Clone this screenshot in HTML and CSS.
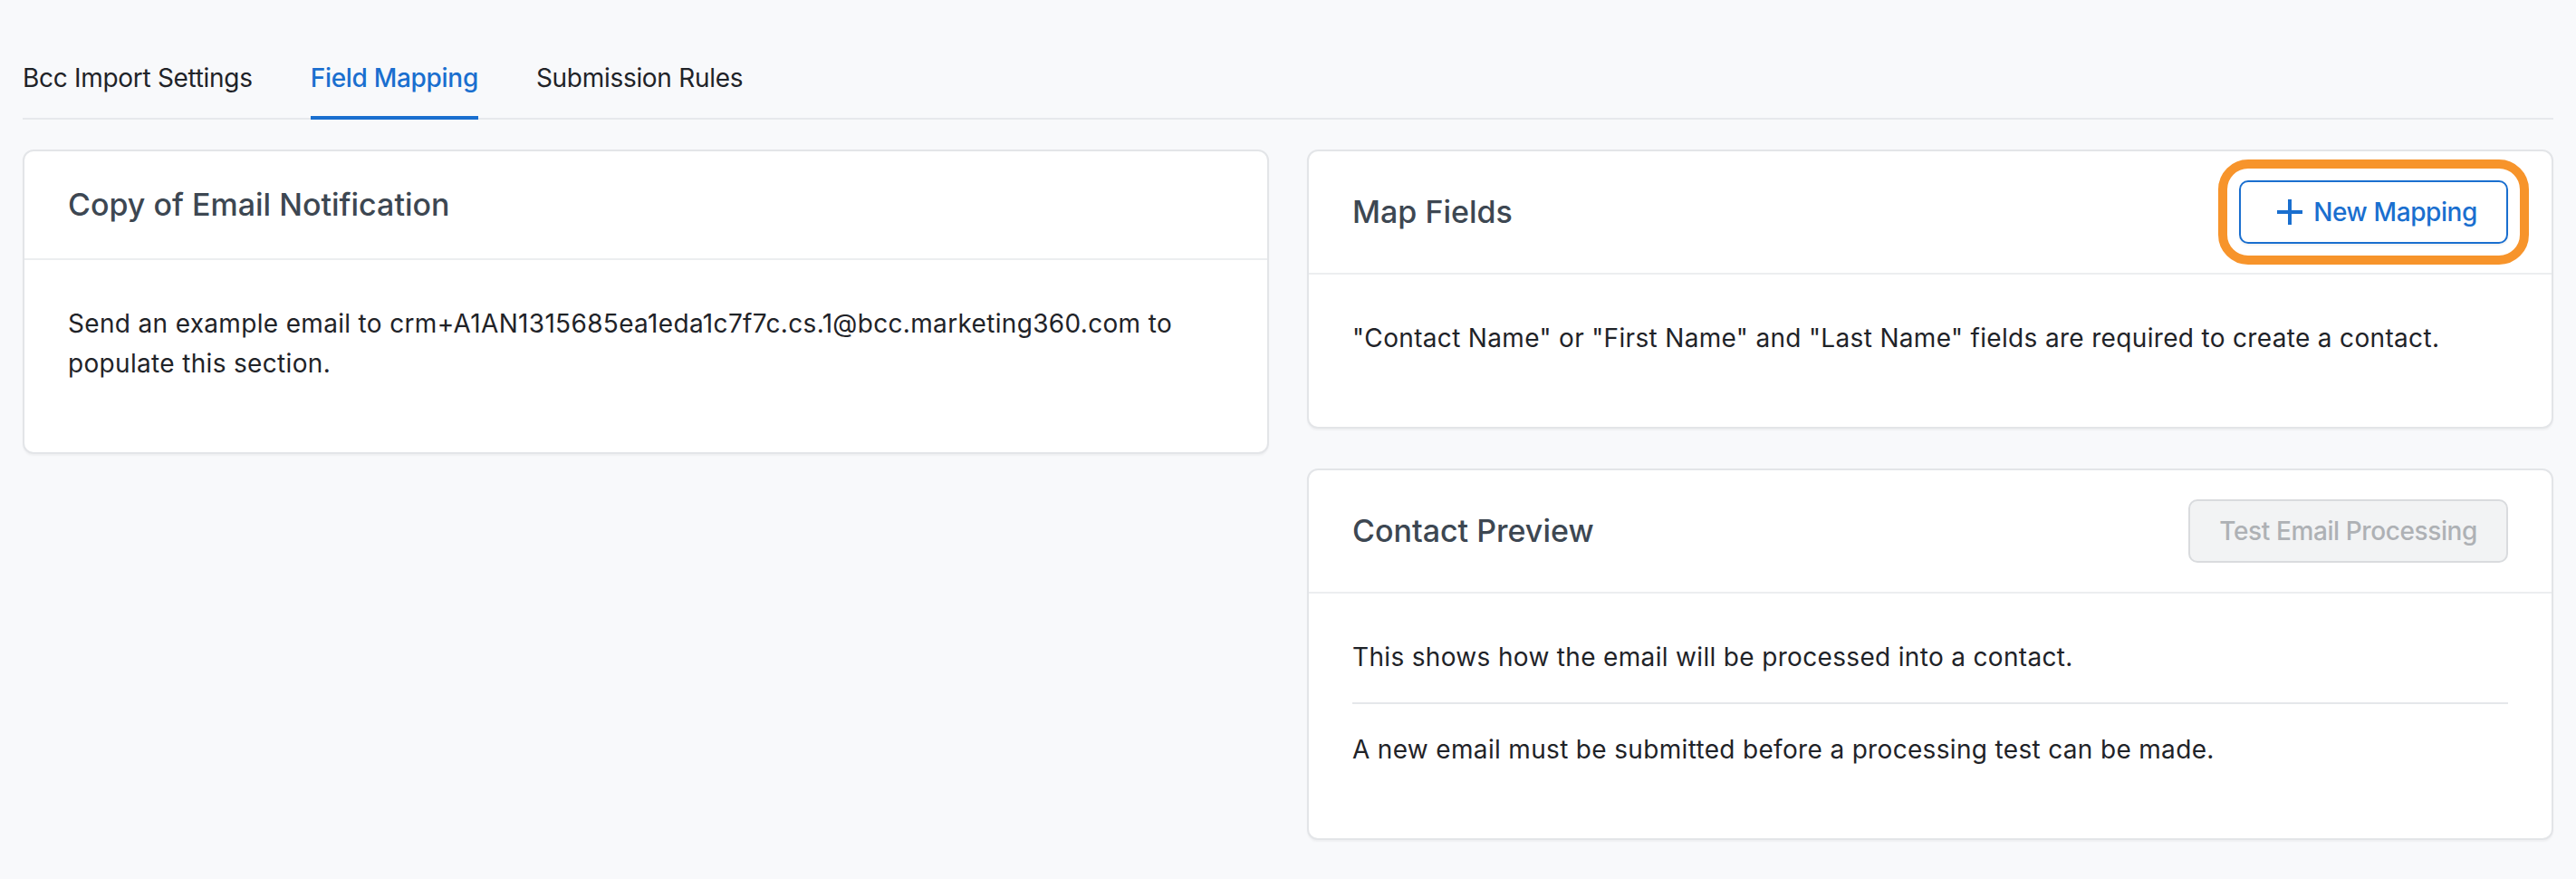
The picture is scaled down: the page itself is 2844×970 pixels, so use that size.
FILE: index.html
```html
<!DOCTYPE html>
<html lang="en">
<head>
  <meta charset="UTF-8">
  <meta name="viewport" content="width=device-width, initial-scale=1.0">
  <title>Bcc Import - Field Mapping</title>

  <link rel="stylesheet" href="styles.css">
</head>
<body>
  <div class="page">
    <nav class="tabs">
      <a class="tab">Bcc Import Settings</a>
      <a class="tab tab-active">Field Mapping</a>
      <a class="tab">Submission Rules</a>
    </nav>

    <div class="columns">
      <div class="column">
        <div class="card">
          <div class="card-header">
            <span class="card-title">Copy of Email Notification</span>
          </div>
          <div class="card-body">
            <p class="card-row">Send an example email to crm+A1AN1315685ea1eda1c7f7c.cs.1@bcc.marketing360.com to populate this section.</p>
          </div>
        </div>
      </div>

      <div class="column">
        <div class="card">
          <div class="card-header">
            <span class="card-title">Map Fields</span>
            <button class="btn btn-primary btn-highlight" id="new-mapping-button">
              <svg class="btn-icon" width="32" height="32" viewBox="0 0 32 32">
                <path d="M16 2v28M2 16h28" stroke="currentColor" stroke-width="4" fill="none"/>
              </svg>
              New Mapping
            </button>
          </div>
          <div class="card-body">
            <p class="card-row">"Contact Name" or "First Name" and "Last Name" fields are required to create a contact.</p>
          </div>
        </div>

        <div class="card">
          <div class="card-header">
            <span class="card-title">Contact Preview</span>
            <button class="btn" disabled>Test Email Processing</button>
          </div>
          <div class="card-body">
            <p class="card-row">This shows how the email will be processed into a contact.</p>
            <p class="card-row">A new email must be submitted before a processing test can be made.</p>
          </div>
        </div>
      </div>
    </div>
  </div>
</body>
</html>
```

FILE: styles.css
```css
body, html {
  margin: 0;
  height: 100%;
  background: #f8f9fb;
  font-family: Inter, "Noto Sans", sans-serif;
  color: #1f2328;
}
.page {
  padding: 0 25px;
}

/* tabs */
.tabs {
  display: flex;
  gap: 64px;
  padding-top: 66px;
  border-bottom: 2px solid #e7e9ec;
}
.tab {
  font-size: 28px;
  line-height: 40px;
  letter-spacing: -0.3px;
  padding-bottom: 22px;
  margin-bottom: -2px;
  border-bottom: 4px solid transparent;
  color: #1f2328;
  cursor: pointer;
}
.tab-active {
  color: #1a6fcf;
  font-weight: 500;
  border-bottom-color: #1a6fcf;
}

/* cards */
.columns {
  display: grid;
  grid-template-columns: 1fr 1fr;
  gap: 42px;
  margin-top: 33px;
  align-items: start;
}
.column {
  display: flex;
  flex-direction: column;
  gap: 44px;
}
.card {
  background: #fff;
  border: 2px solid #e3e5e8;
  border-radius: 12px;
  box-shadow: 0 2px 2px rgba(0, 0, 0, 0.04);
}
.card-header {
  display: flex;
  align-items: center;
  justify-content: space-between;
  padding: 32px 48px;
  border-bottom: 2px solid #eceef0;
}
.card-title {
  font-size: 34px;
  line-height: 54px;
  font-weight: 500;
  color: #3d4752;
}
.card-body {
  padding: 48px 48px 48px;
}
.card-row {
  margin: 0;
  padding-bottom: 28px;
  font-size: 28px;
  line-height: 44px;
  letter-spacing: 0.33px;
}
.card-row + .card-row {
  padding-top: 28px;
  border-top: 2px solid #e5e7ea;
}

/* buttons */
.btn {
  display: flex;
  align-items: center;
  height: 70px;
  padding: 0 32px;
  border: 2px solid #d9dbde;
  border-radius: 10px;
  background: #f2f3f4;
  color: #aeb1b5;
  font-family: inherit;
  font-size: 28px;
  font-weight: 500;
  letter-spacing: -0.4px;
}
.btn-primary {
  background: #fff;
  border-color: #1a6fcf;
  color: #1a6fcf;
  box-shadow: 0 2px 2px rgba(0, 0, 0, 0.05);
}
.btn-icon {
  margin-left: 6px;
  margin-right: 10px;
}
.btn-highlight {
  outline: 10px solid #f7942b;
  outline-offset: 13px;
}
```
